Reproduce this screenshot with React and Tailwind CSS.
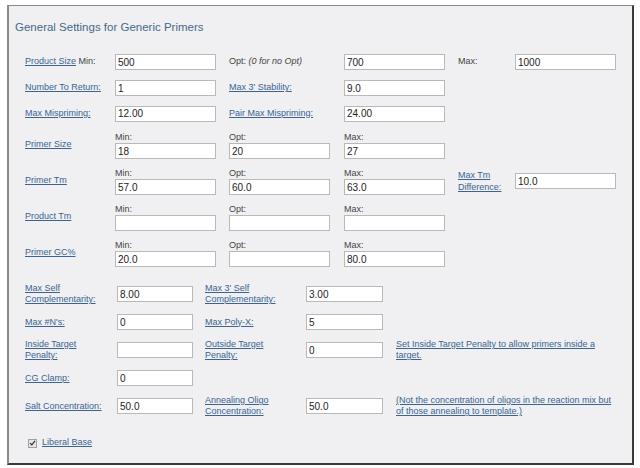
import React from 'react';

const linkCls = 'text-[#3a6391] underline decoration-[#3a6391]';

const Field = ({ value = '', w = 'w-[101px]' }) => (
    <input
        readOnly
        defaultValue={value}
        className={`${w} h-[16px] bg-white border border-[#b9b9b9] px-[2px] py-0 text-[10px] leading-[14px] text-[#222] outline-none`}
    />
);

// top rows: label | input | label | input | label | input
const TopRow = ({ a, av, b, bv, c, cv, h = 'h-[26px]' }) => (
    <div className={`flex items-center ${h}`}>
        <div className="w-[90px] shrink-0">{a}</div>
        <div className="w-[114px] shrink-0"><Field value={av} /></div>
        <div className="w-[115px] shrink-0">{b}</div>
        <div className="w-[114px] shrink-0">{b !== undefined && <Field value={bv} />}</div>
        <div className="w-[57px] shrink-0">{c}</div>
        <div className="w-[101px] shrink-0">{c !== undefined && <Field value={cv} />}</div>
    </div>
);

const MinOptMax = ({ label, min = '', opt = '', max = '', extra }) => (
    <div className="flex items-start h-[36px]">
        <div className="w-[90px] shrink-0 h-[28px] flex items-center">
            <span className={linkCls}>{label}</span>
        </div>
        {[['Min:', min], ['Opt:', opt], ['Max:', max]].map(([t, v], i) => (
            <div key={t} className={`${i === 1 ? 'w-[115px]' : 'w-[114px]'} shrink-0 flex flex-col`}>
                <span className="h-[12px] leading-[12px] text-[#444]">{t}</span>
                <Field value={v} />
            </div>
        ))}
        {extra && (
            <>
                <div className="w-[57px] shrink-0 h-[28px] flex items-center leading-[12px]">
                    <span className={linkCls}>Max Tm<br />Difference:</span>
                </div>
                <div className="w-[101px] shrink-0 h-[28px] flex items-center"><Field value={extra} /></div>
            </>
        )}
    </div>
);

const LowRow = ({ a, av, b, bv, note }) => (
    <div className="flex items-center h-[28px] leading-[11px]">
        <div className="w-[92px] shrink-0"><span className={linkCls}>{a}</span></div>
        <div className="w-[88px] shrink-0"><Field value={av} w="w-[76px]" /></div>
        <div className="w-[101px] shrink-0">{b && <span className={linkCls}>{b}</span>}</div>
        <div className="w-[90px] shrink-0">{b && <Field value={bv} w="w-[77px]" />}</div>
        <div className="w-[230px] shrink-0">{note && <span className={linkCls}>{note}</span>}</div>
    </div>
);

export default function App() {
    return (
        <div className="w-[640px] h-[468px] bg-white pt-[5px] pl-[7px] font-['Liberation_Sans',Arial,sans-serif] text-[9px]">
            <div className="w-[627px] h-[460px] bg-[#f0f0f2] border-t border-l-2 border-[#8a8a8a] border-r-2 border-b-2 border-r-[#3a3a3a] border-b-[#3a3a3a] pl-[16px]">
                <div className="mt-[14px] ml-[-10px] h-[14px] leading-[14px] text-[11.5px] text-[#46688a]">
                    General Settings for Generic Primers
                </div>
                <div className="mt-[15px]">
                    <TopRow
                        a={<span className="text-[#444]"><span className={linkCls}>Product Size</span> Min:</span>}
                        av="500"
                        b={<span className="text-[#444]">Opt: <i>(0 for no Opt)</i></span>}
                        bv="700"
                        c={<span className="text-[#444]">Max:</span>}
                        cv="1000"
                    />
                    <TopRow
                        a={<span className={linkCls}>Number To Return:</span>}
                        av="1"
                        b={<span className={linkCls}>Max 3' Stability:</span>}
                        bv="9.0"
                    />
                    <TopRow
                        h="h-[25px]"
                        a={<span className={linkCls}>Max Mispriming:</span>}
                        av="12.00"
                        b={<span className={linkCls}>Pair Max Mispriming:</span>}
                        bv="24.00"
                    />
                </div>
                <div className="mt-[5px]">
                    <MinOptMax label="Primer Size" min="18" opt="20" max="27" />
                    <MinOptMax label="Primer Tm" min="57.0" opt="60.0" max="63.0" extra="10.0" />
                    <MinOptMax label="Product Tm" />
                    <MinOptMax label="Primer GC%" min="20.0" max="80.0" />
                </div>
                <div className="mt-[5px]">
                    <LowRow a={<>Max Self<br />Complementarity:</>} av="8.00" b={<>Max 3' Self<br />Complementarity:</>} bv="3.00" />
                    <LowRow a="Max #N's:" av="0" b="Max Poly-X:" bv="5" />
                    <LowRow
                        a={<>Inside Target<br />Penalty:</>}
                        av=""
                        b={<>Outside Target<br />Penalty:</>}
                        bv="0"
                        note={<>Set Inside Target Penalty to allow primers inside a<br />target.</>}
                    />
                    <LowRow a="CG Clamp:" av="0" />
                    <LowRow
                        a="Salt Concentration:"
                        av="50.0"
                        b={<>Annealing Oligo<br />Concentration:</>}
                        bv="50.0"
                        note={<>(Not the concentration of oligos in the reaction mix but<br />of those annealing to template.)</>}
                    />
                </div>
                <div className="mt-[15px] h-[16px] flex items-center pl-[3px] gap-[5px]">
                    <span className="w-[9px] h-[9px] border border-[#a0a0a0] bg-[#e4e4e4] flex items-center justify-center">
                        <svg viewBox="0 0 10 10" className="w-[8px] h-[8px]">
                            <path d="M1.5 5.2 L4 7.6 L8.6 2" fill="none" stroke="#333" strokeWidth="1.8" />
                        </svg>
                    </span>
                    <span className={linkCls}>Liberal Base</span>
                </div>
            </div>
        </div>
    );
}
